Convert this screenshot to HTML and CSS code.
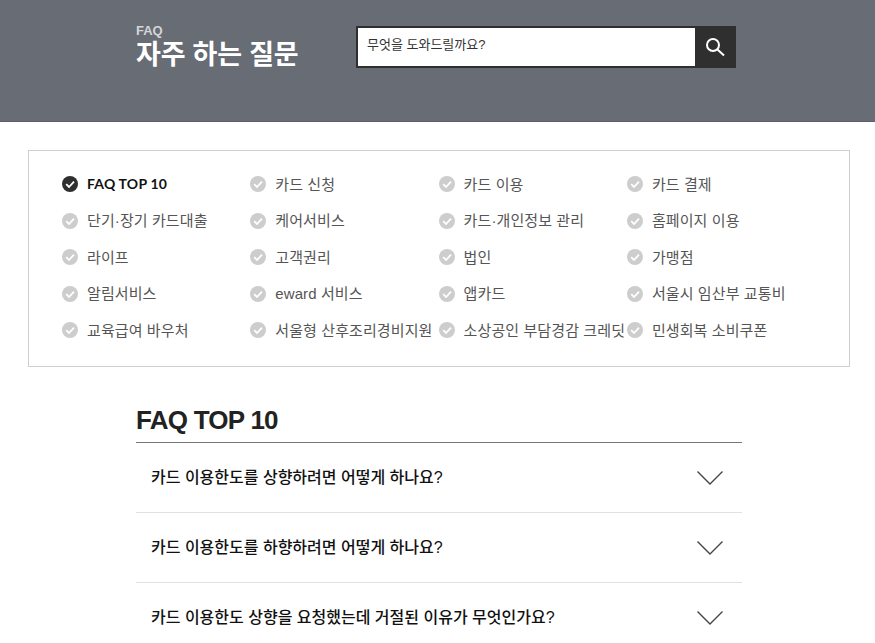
FILE: index.html
```html
<!DOCTYPE html>
<html lang="ko">
<head>
<meta charset="utf-8">
<title>FAQ</title>
<link rel="stylesheet" href="styles.css">
</head>
<body>
<header class="hero">
  <div class="hero-title">
    <p class="eyebrow">FAQ</p>
    <h1>자주 하는 질문</h1>
  </div>
  <form class="search">
    <div class="search-field">무엇을 도와드릴까요?</div>
    <div class="search-btn">
      <svg width="22" height="22" viewBox="0 0 22 22" fill="none" stroke="#fff"><circle cx="9" cy="9" r="6" stroke-width="2"/><path d="M13.5 13.5L20 19.5" stroke-width="2"/></svg>
    </div>
  </form>
</header>

<nav class="cats">
  <ul class="cat-grid">
    <li class="cat active"><svg class="chk" viewBox="0 0 16 16"><circle cx="8" cy="8" r="8"/><path d="M4.2 8.2L7 11l5-5.4"/></svg><span>FAQ TOP 10</span></li>
    <li class="cat"><svg class="chk" viewBox="0 0 16 16"><circle cx="8" cy="8" r="8"/><path d="M4.2 8.2L7 11l5-5.4"/></svg><span>카드 신청</span></li>
    <li class="cat"><svg class="chk" viewBox="0 0 16 16"><circle cx="8" cy="8" r="8"/><path d="M4.2 8.2L7 11l5-5.4"/></svg><span>카드 이용</span></li>
    <li class="cat"><svg class="chk" viewBox="0 0 16 16"><circle cx="8" cy="8" r="8"/><path d="M4.2 8.2L7 11l5-5.4"/></svg><span>카드 결제</span></li>
    <li class="cat"><svg class="chk" viewBox="0 0 16 16"><circle cx="8" cy="8" r="8"/><path d="M4.2 8.2L7 11l5-5.4"/></svg><span>단기·장기 카드대출</span></li>
    <li class="cat"><svg class="chk" viewBox="0 0 16 16"><circle cx="8" cy="8" r="8"/><path d="M4.2 8.2L7 11l5-5.4"/></svg><span>케어서비스</span></li>
    <li class="cat"><svg class="chk" viewBox="0 0 16 16"><circle cx="8" cy="8" r="8"/><path d="M4.2 8.2L7 11l5-5.4"/></svg><span>카드·개인정보 관리</span></li>
    <li class="cat"><svg class="chk" viewBox="0 0 16 16"><circle cx="8" cy="8" r="8"/><path d="M4.2 8.2L7 11l5-5.4"/></svg><span>홈페이지 이용</span></li>
    <li class="cat"><svg class="chk" viewBox="0 0 16 16"><circle cx="8" cy="8" r="8"/><path d="M4.2 8.2L7 11l5-5.4"/></svg><span>라이프</span></li>
    <li class="cat"><svg class="chk" viewBox="0 0 16 16"><circle cx="8" cy="8" r="8"/><path d="M4.2 8.2L7 11l5-5.4"/></svg><span>고객권리</span></li>
    <li class="cat"><svg class="chk" viewBox="0 0 16 16"><circle cx="8" cy="8" r="8"/><path d="M4.2 8.2L7 11l5-5.4"/></svg><span>법인</span></li>
    <li class="cat"><svg class="chk" viewBox="0 0 16 16"><circle cx="8" cy="8" r="8"/><path d="M4.2 8.2L7 11l5-5.4"/></svg><span>가맹점</span></li>
    <li class="cat"><svg class="chk" viewBox="0 0 16 16"><circle cx="8" cy="8" r="8"/><path d="M4.2 8.2L7 11l5-5.4"/></svg><span>알림서비스</span></li>
    <li class="cat"><svg class="chk" viewBox="0 0 16 16"><circle cx="8" cy="8" r="8"/><path d="M4.2 8.2L7 11l5-5.4"/></svg><span>eward 서비스</span></li>
    <li class="cat"><svg class="chk" viewBox="0 0 16 16"><circle cx="8" cy="8" r="8"/><path d="M4.2 8.2L7 11l5-5.4"/></svg><span>앱카드</span></li>
    <li class="cat"><svg class="chk" viewBox="0 0 16 16"><circle cx="8" cy="8" r="8"/><path d="M4.2 8.2L7 11l5-5.4"/></svg><span>서울시 임산부 교통비</span></li>
    <li class="cat"><svg class="chk" viewBox="0 0 16 16"><circle cx="8" cy="8" r="8"/><path d="M4.2 8.2L7 11l5-5.4"/></svg><span>교육급여 바우처</span></li>
    <li class="cat"><svg class="chk" viewBox="0 0 16 16"><circle cx="8" cy="8" r="8"/><path d="M4.2 8.2L7 11l5-5.4"/></svg><span>서울형 산후조리경비지원</span></li>
    <li class="cat"><svg class="chk" viewBox="0 0 16 16"><circle cx="8" cy="8" r="8"/><path d="M4.2 8.2L7 11l5-5.4"/></svg><span>소상공인 부담경감 크레딧</span></li>
    <li class="cat"><svg class="chk" viewBox="0 0 16 16"><circle cx="8" cy="8" r="8"/><path d="M4.2 8.2L7 11l5-5.4"/></svg><span>민생회복 소비쿠폰</span></li>
  </ul>
</nav>

<main class="faq">
  <h2>FAQ TOP 10</h2>
  <ul class="faq-list">
    <li class="faq-item"><span>카드 이용한도를 상향하려면 어떻게 하나요?</span><svg class="chev" viewBox="0 0 26 16"><path d="M0.5 1.5L13 14L25.5 1.5"/></svg></li>
    <li class="faq-item"><span>카드 이용한도를 하향하려면 어떻게 하나요?</span><svg class="chev" viewBox="0 0 26 16"><path d="M0.5 1.5L13 14L25.5 1.5"/></svg></li>
    <li class="faq-item"><span>카드 이용한도 상향을 요청했는데 거절된 이유가 무엇인가요?</span><svg class="chev" viewBox="0 0 26 16"><path d="M0.5 1.5L13 14L25.5 1.5"/></svg></li>
  </ul>
</main>
</body>
</html>
```

FILE: styles.css
```css
* { box-sizing: border-box; }
html, body { height: 643px; overflow: hidden; }
body {
  margin: 0;
  background: #fff;
  color: #222;
  font-family: "Liberation Sans", "Noto Sans CJK KR", sans-serif;
}
ul { list-style: none; margin: 0; padding: 0; }

.hero {
  height: 122px;
  background: #686c75;
  border-bottom: 1px solid #5d6069;
  padding: 24px 0 0 136px;
  display: flex;
  align-items: flex-start;
}
.hero-title { width: 220px; color: #fff; }
.eyebrow {
  margin: 0 0 2px;
  font-size: 13px;
  line-height: 14px;
  font-weight: 700;
  color: #d4d5d8;
}
h1 {
  margin: 0;
  font-size: 27px;
  line-height: 30px;
  font-weight: 700;
  letter-spacing: -0.2px;
}
.search {
  display: flex;
  width: 380px;
  height: 42px;
  margin-top: 2px;
  border: 2px solid #2f2f2f;
  background: #fff;
}
.search-field {
  flex: 1;
  padding-left: 9px;
  font-size: 13px;
  line-height: 34px;
  color: #333;
}
.search-btn {
  width: 39px;
  background: #2f2f2f;
  display: flex;
  align-items: center;
  justify-content: center;
}

.cats {
  margin: 28px 25px 0 28px;
  height: 217px;
  border: 1px solid #cfcfcf;
  padding: 15px 0 0 33px;
}
.cat-grid {
  display: grid;
  grid-template-columns: repeat(4, 188.3px);
  grid-auto-rows: 36.5px;
}
.cat {
  display: flex;
  align-items: center;
  gap: 9px;
  font-size: 15px;
  letter-spacing: 0.1px;
  color: #555;
  white-space: nowrap;
}
.cat span { padding-bottom: 2px; }
.chk { width: 16px; height: 16px; flex: none; }
.chk circle { fill: #cdcdcd; }
.chk path { fill: none; stroke: #fff; stroke-width: 1.8; }
.active {
  font-size: 14px;
  letter-spacing: 0.2px;
  font-weight: 700;
  color: #111;
  font-family: "Lato", "Noto Sans CJK KR", sans-serif;
}
.active .chk circle { fill: #2f2f2f; }

.faq { margin: 36px 133px 0 136px; }
h2 {
  margin: 0;
  height: 40px;
  font-size: 26px;
  line-height: 35px;
  font-weight: 700;
  letter-spacing: -0.75px;
  color: #222;
  border-bottom: 1px solid #777;
}
.faq-item {
  height: 70px;
  padding: 0 19px 0 15px;
  display: flex;
  align-items: center;
  justify-content: space-between;
  border-bottom: 1px solid #e0e0e0;
  font-size: 16px;
  font-weight: 500;
  color: #111;
}
.faq-item span { padding-bottom: 4px; }
.chev { width: 26px; height: 16px; flex: none; }
.chev path { fill: none; stroke: #444; stroke-width: 1.4; }
```
